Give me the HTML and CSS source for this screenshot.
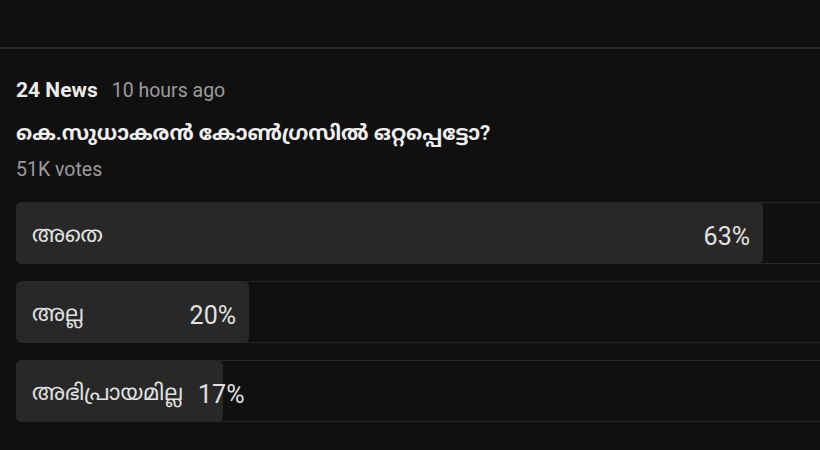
FILE: index.html
```html
<!DOCTYPE html>
<html lang="ml">
<head>
  <meta charset="UTF-8" />
  <meta name="viewport" content="width=device-width, initial-scale=1.0" />
  <title>Poll</title>
  <link rel="stylesheet" href="styles.css">
</head>
<body>
  <div class="topbar"></div>

  <div class="post">
    <div class="meta">
      <span class="source">24 News</span>
      <span class="time">10 hours ago</span>
    </div>
    <div class="question">കെ.സുധാകരൻ കോൺഗ്രസിൽ ഒറ്റപ്പെട്ടോ?</div>
    <div class="votes">51K votes</div>

    <div class="options">
      <div class="option">
        <div class="fill" style="width: 747px">
          <span class="label">അതെ</span>
          <span class="pct">63%</span>
        </div>
      </div>
      <div class="option">
        <div class="fill" style="width: 233px">
          <span class="label">അല്ല</span>
          <span class="pct">20%</span>
        </div>
      </div>
      <div class="option">
        <div class="fill" style="width: 207px">
          <span class="label">അഭിപ്രായമില്ല</span>
          <span class="pct">17%</span>
        </div>
      </div>
    </div>
  </div>
</body>
</html>
```

FILE: styles.css
```css
html, body {
  margin: 0;
  padding: 0;
  overflow: hidden;
  background: #101010;
  color: #e6e6e6;
  font-family: Roboto, "Noto Sans", "Noto Sans Malayalam", sans-serif;
}
.topbar {
  height: 47px;
  border-bottom: 2px solid #282828;
}
.post {
  padding: 29px 0 0 16px;
  width: 1200px;
}
.meta {
  line-height: 24px;
  display: flex;
  align-items: baseline;
  gap: 14px;
}
.source {
  font-size: 21px;
  font-weight: 700;
  color: #ececec;
}
.time {
  font-size: 19.5px;
  color: #9c9c9c;
}
.question {
  margin-top: 16px;
  line-height: 28px;
  font-size: 20.5px;
  font-weight: 700;
  color: #f0f0f0;
}
.votes {
  margin-top: 13px;
  line-height: 20px;
  font-size: 19.5px;
  color: #9c9c9c;
}
.options {
  margin-top: 22px;
  display: flex;
  flex-direction: column;
  gap: 17px;
}
.option {
  height: 60px;
  border: 1px solid #262626;
  border-radius: 6px;
  display: flex;
}
.fill {
  margin: -1px 0 -1px -1px;
  background: #282828;
  border-radius: 6px;
  display: flex;
  align-items: center;
  justify-content: space-between;
  gap: 15px;
  padding: 6px 13px 0 16px;
  box-sizing: border-box;
  white-space: nowrap;
}
.label {
  font-size: 22px;
  color: #e2e2e2;
}
.pct {
  font-size: 25px;
  color: #e2e2e2;
}
```
